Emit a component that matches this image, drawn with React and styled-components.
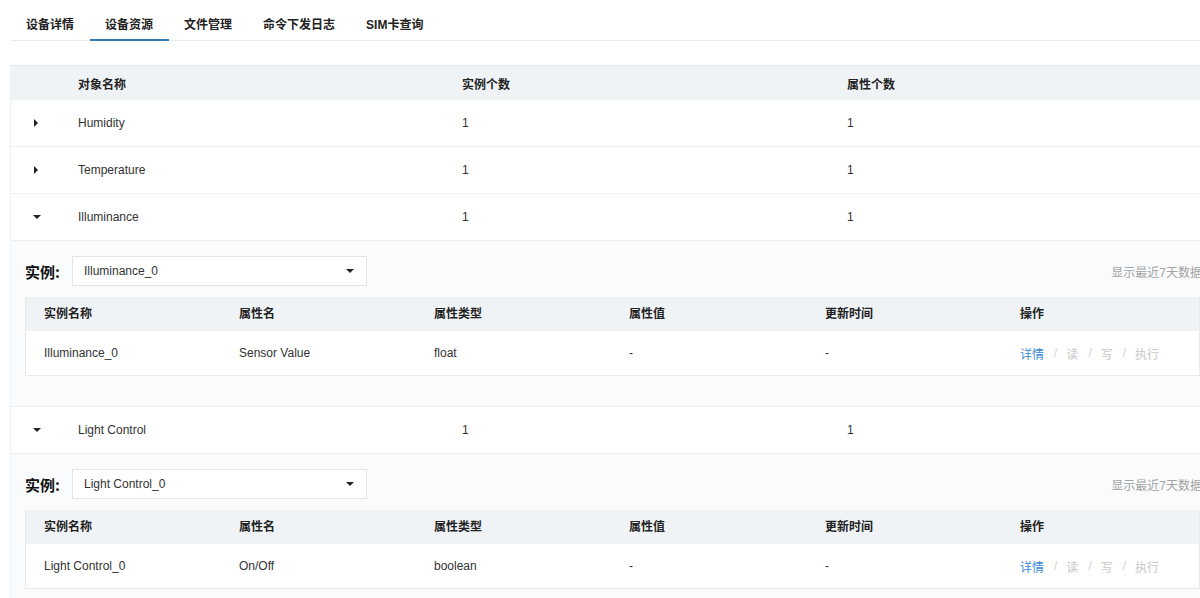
import React from "react";
import styled, { createGlobalStyle } from "styled-components";

const Global = createGlobalStyle`
  html, body { margin: 0; padding: 0; background: #fff; overflow: hidden; }
  body { font-family: "Liberation Sans", Arial, "Noto Sans CJK SC", sans-serif; color: #333; font-size: 12px; }
  * { box-sizing: border-box; }
`;

const Page = styled.div`
  width: 1240px;
  padding: 0 0 0 10px;
`;

const TabBar = styled.div`
  display: flex;
  border-bottom: 1px solid #e9ebee;
  width: 1230px;
  padding-left: 0.5px;
`;

const Tab = styled.div`
  padding: 18px 15.5px 0;
  height: 41px;
  margin-bottom: -1px;
  font-size: 12px;
  line-height: 14px;
  font-weight: bold;
  color: #222;
  border-bottom: 2px solid ${(p) => (p.$active ? "#2e7bb5" : "transparent")};
`;

const Table = styled.div`
  margin-top: 24px;
  width: 1212px;
  border-top: 1px solid #e6e9ec;
  border-left: 1px solid #eef0f2;
`;

const Grid = styled.div`
  display: grid;
  grid-template-columns: 67px 384px 385px 1fr;
  align-items: center;
  height: ${(p) => (p.$head ? 34 : 47)}px;
  background: ${(p) => (p.$head ? "#eff3f6" : "#fff")};
  border-bottom: ${(p) => (p.$head ? "none" : "1px solid #ebeef0")};
  font-weight: ${(p) => (p.$head ? "bold" : "normal")};
  color: ${(p) => (p.$head ? "#222" : "#333")};
`;

const ArrowCell = styled.div`
  display: flex;
  align-items: center;
  padding-left: 23px;
`;

const Caret = styled.span`
  display: inline-block;
  width: 0;
  height: 0;
  ${(p) =>
    p.$open
      ? `border-left: 4px solid transparent; border-right: 4px solid transparent; border-top: 4px solid #222; margin-left: -1px;`
      : `border-top: 4px solid transparent; border-bottom: 4px solid transparent; border-left: 4px solid #222;`}
`;

const Cell = styled.div`
  white-space: nowrap;
`;

const Expand = styled.div`
  background: #fafbfc;
  padding: 15px 12px 30px 14px;
  border-bottom: 1px solid #e9ecee;
`;

const Toolbar = styled.div`
  display: flex;
  align-items: center;
  height: 30px;
  margin-bottom: 11px;
`;

const Label = styled.span`
  font-size: 15px;
  font-weight: bold;
  color: #111;
  font-family: "Noto Sans CJK SC", sans-serif;
  width: 47px;
`;

const Select = styled.div`
  width: 295px;
  height: 30px;
  background: #fff;
  border: 1px solid #e2e5e8;
  display: flex;
  align-items: center;
  justify-content: space-between;
  padding: 0 12px 0 11px;
  color: #333;
`;

const Hint = styled.span`
  margin-left: auto;
  color: #a3a3a3;
  white-space: nowrap;
  margin-right: 8px;
`;

const Inner = styled.div`
  border: 1px solid #e7eaec;
  border-top: none;
  width: 1175px;
`;

const InnerGrid = styled.div`
  display: grid;
  grid-template-columns: 195px 195px 195px 196px 195px 1fr;
  align-items: center;
  padding-left: 18px;
  padding-bottom: ${(p) => (p.$head ? 3 : 0)}px;
  height: ${(p) => (p.$head ? 34 : 44)}px;
  background: ${(p) => (p.$head ? "#eff3f6" : "#fff")};
  font-weight: ${(p) => (p.$head ? "bold" : "normal")};
  color: ${(p) => (p.$head ? "#222" : "#333")};
`;

const Ops = styled.div`
  display: flex;
  align-items: center;
  color: #c8c8c8;
`;

const Op = styled.span`
  color: ${(p) => (p.$primary ? "#3a87d6" : "#c8c8c8")};
`;

const Sep = styled.span`
  margin: 0 9px 0 10px;
  color: #d0d0d0;
`;

const objects = [
  { name: "Humidity", open: false },
  { name: "Temperature", open: false },
  {
    name: "Illuminance",
    open: true,
    inst: "Illuminance_0",
    prop: "Sensor Value",
    type: "float",
  },
  {
    name: "Light Control",
    open: true,
    inst: "Light Control_0",
    prop: "On/Off",
    type: "boolean",
  },
];

const tabs = ["设备详情", "设备资源", "文件管理", "命令下发日志", "SIM卡查询"];

function Detail({ o }) {
  return (
    <Expand>
      <Toolbar>
        <Label>实例:</Label>
        <Select>
          <span>{o.inst}</span>
          <Caret $open />
        </Select>
        <Hint>显示最近7天数据</Hint>
      </Toolbar>
      <Inner>
        <InnerGrid $head>
          <Cell>实例名称</Cell>
          <Cell>属性名</Cell>
          <Cell>属性类型</Cell>
          <Cell>属性值</Cell>
          <Cell>更新时间</Cell>
          <Cell>操作</Cell>
        </InnerGrid>
        <InnerGrid>
          <Cell>{o.inst}</Cell>
          <Cell>{o.prop}</Cell>
          <Cell>{o.type}</Cell>
          <Cell>-</Cell>
          <Cell>-</Cell>
          <Ops>
            <Op $primary>详情</Op>
            <Sep>/</Sep>
            <Op>读</Op>
            <Sep>/</Sep>
            <Op>写</Op>
            <Sep>/</Sep>
            <Op>执行</Op>
          </Ops>
        </InnerGrid>
      </Inner>
    </Expand>
  );
}

export default function App() {
  return (
    <>
      <Global />
      <Page>
        <TabBar>
          {tabs.map((t, i) => (
            <Tab key={t} $active={i === 1}>
              {t}
            </Tab>
          ))}
        </TabBar>
        <Table>
          <Grid $head>
            <Cell />
            <Cell>对象名称</Cell>
            <Cell>实例个数</Cell>
            <Cell>属性个数</Cell>
          </Grid>
          {objects.map((o) => (
            <React.Fragment key={o.name}>
              <Grid>
                <ArrowCell>
                  <Caret $open={o.open} />
                </ArrowCell>
                <Cell>{o.name}</Cell>
                <Cell>1</Cell>
                <Cell>1</Cell>
              </Grid>
              {o.open && <Detail o={o} />}
            </React.Fragment>
          ))}
        </Table>
      </Page>
    </>
  );
}
